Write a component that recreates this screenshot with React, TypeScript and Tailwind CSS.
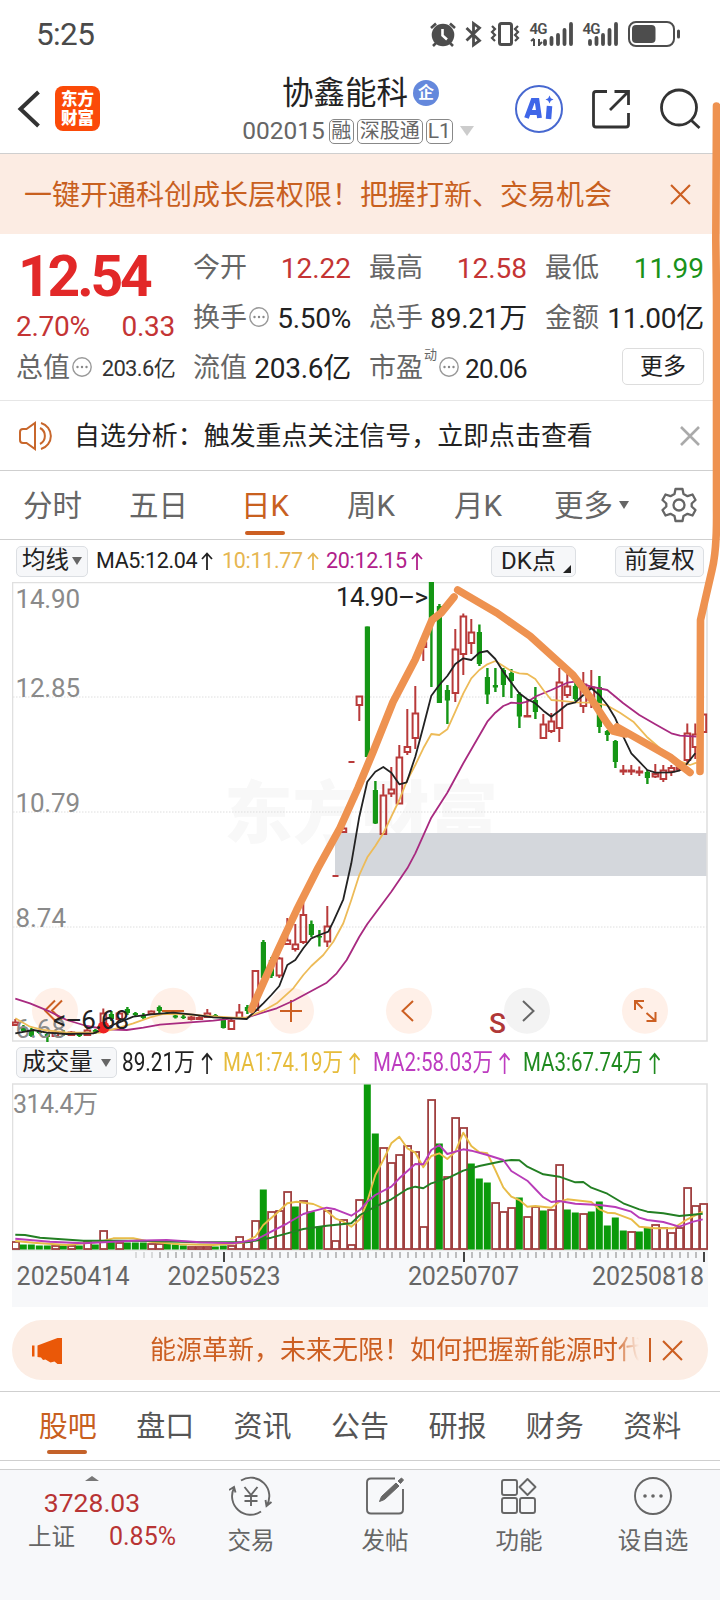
import React from 'react'
import clsx from 'clsx'

const CANDLE_STEP = 8
const FIRST_X = 15.3
const UP = '#b83a3a'
const DOWN = '#159615'

// [index, up/down, high, body top, body bottom, low]
type Candle = [number, 'r' | 'g', number, number, number, number]

const candles: Candle[] = [
  [0, 'r', 1019, 1022, 1025, 1026],
  [1, 'g', 1025, 1027, 1031, 1032],
  [2, 'g', 1028, 1030, 1036, 1037],
  [3, 'g', 1030, 1031, 1033, 1034],
  [4, 'g', 1033, 1034, 1037, 1042],
  [5, 'r', 1030, 1032, 1036, 1037],
  [6, 'g', 1030, 1032, 1034, 1036],
  [7, 'r', 1031, 1032, 1035, 1036],
  [8, 'g', 1032, 1033, 1036, 1037],
  [9, 'r', 1028, 1030, 1035, 1036],
  [10, 'g', 1029, 1030, 1033, 1034],
  [11, 'r', 1008.5, 1013, 1023, 1025],
  [12, 'g', 1011, 1014, 1019, 1021],
  [13, 'r', 1011, 1013, 1019, 1020],
  [14, 'g', 1007, 1009, 1013, 1015],
  [15, 'g', 1012, 1013, 1015, 1016],
  [16, 'g', 1013, 1015, 1018, 1019],
  [17, 'r', 1010.5, 1011, 1014, 1014.5],
  [18, 'g', 1005.5, 1007, 1011, 1013],
  [19, 'g', 1012, 1012.5, 1013.5, 1014],
  [20, 'g', 1014.5, 1015.5, 1017.5, 1018.5],
  [21, 'g', 1015, 1016.5, 1018, 1019],
  [22, 'r', 1016, 1017, 1019, 1020.5],
  [23, 'r', 1016, 1017.5, 1019, 1020],
  [24, 'r', 1009, 1013, 1017, 1018],
  [25, 'g', 1014, 1015, 1017, 1018],
  [26, 'g', 1018, 1020, 1028, 1028.5],
  [27, 'r', 1019, 1020.5, 1029, 1029],
  [28, 'r', 1004, 1012, 1018, 1019],
  [29, 'g', 1005, 1007, 1011, 1014],
  [30, 'r', 970, 970.5, 1010, 1012],
  [31, 'g', 940, 942, 978, 979],
  [32, 'g', 957, 960, 976, 978],
  [33, 'r', 957, 958, 975.5, 978],
  [34, 'r', 918, 940, 944, 945],
  [35, 'r', 924, 944, 949, 951.5],
  [36, 'r', 903, 914.5, 942, 944],
  [37, 'g', 920.5, 924, 935, 937],
  [38, 'g', 930, 936, 937.5, 946.5],
  [39, 'r', 906, 926, 941.5, 947],
  [41, 'r', 827, 828, 832, 833],
  [43, 'r', 696, 696, 705, 721],
  [44, 'g', 626.5, 626.5, 757, 757],
  [45, 'g', 781, 790, 823.5, 824],
  [46, 'r', 784, 795, 834, 834],
  [47, 'r', 767, 789, 793.5, 797],
  [48, 'r', 745, 757, 803.5, 804],
  [49, 'r', 709, 746.5, 752, 755],
  [50, 'r', 686, 713, 738, 749],
  [51, 'r', 638, 642, 647, 661],
  [52, 'g', 582, 582, 620, 687],
  [53, 'g', 604, 606, 703, 703],
  [54, 'g', 685, 690, 700.5, 724],
  [55, 'r', 629, 649, 693, 702],
  [56, 'r', 613.5, 616, 654, 675],
  [57, 'r', 619, 632, 643, 654],
  [58, 'g', 624.5, 632, 664, 666],
  [59, 'g', 668, 677, 694.5, 704],
  [60, 'g', 668, 685, 687.5, 692],
  [61, 'g', 668, 670, 685, 697],
  [62, 'g', 669, 673, 681, 698],
  [63, 'g', 692, 694, 716.5, 728],
  [64, 'r', 700, 715.5, 716, 717],
  [65, 'g', 687, 700, 712, 719],
  [66, 'r', 714, 724, 738, 738],
  [67, 'r', 713, 721, 731, 733],
  [68, 'r', 668, 682, 728, 742],
  [69, 'r', 674, 686, 695, 698],
  [70, 'g', 680, 686, 699, 701],
  [71, 'r', 672, 684, 706, 713],
  [72, 'r', 670, 687, 700, 708],
  [73, 'g', 676, 687, 727, 733],
  [74, 'g', 730, 731, 735, 741],
  [75, 'g', 740, 741, 762, 768],
  [76, 'r', 765, 770, 771.5, 775],
  [77, 'r', 765, 770, 771.5, 775],
  [78, 'r', 766.5, 771, 772.5, 776],
  [79, 'g', 770, 772, 778, 784],
  [80, 'r', 764, 773.5, 776.5, 778],
  [81, 'r', 765, 770, 779, 782],
  [82, 'r', 765, 767.5, 771.5, 776],
  [83, 'r', 763, 767, 769.5, 771],
  [84, 'r', 723.5, 733, 760, 765],
  [85, 'r', 723.5, 734, 747, 759],
  [86, 'r', 714, 714, 732, 733],
]

// bar heights, negative for a falling day
const volumes = [
  8, -5, -5, -4, -4, 4, -4, 4, -4, 9, -5, 19, -8, 7, -7, -7, -7, 6, 6, -6, -5, -4, 3, 3, 3, -3, -4, 4, 13, 8, 29, -60, 38,
  39, 58, -43, 49, -38, -23, 39, 9, 30, 5, 50, -165, -116, 102, 87, 95, 104, 98, 23, 150, -106, 73, 132, 122, -86, -71,
  -67, 47, 38, 42, -52, 33, 43, -39, 40, 85, -40, -37, 36, -38, -48, -24, -32, -19, 18, -18, -22, 25, 22, 17, 22, 62,
  44, 46,
]

type Segment = [number, number, string]

// joins hand-digitised stretches (3 units per px, each with its own origin) into one line
function trace(segments: Segment[]) {
  return segments
    .flatMap(([ox, oy, pts]) =>
      pts.split(' ').map((p) => {
        const [x, y] = p.split(',').map(Number)
        return `${(ox + x / 3).toFixed(1)},${(oy + y / 3).toFixed(1)}`
      })
    )
    .join(' ')
}

const ma5 = trace([
  [0, 880, '46,460 100,450 140,458 200,462 280,460 310,448 350,430 400,410 454,403 520,398 580,404 640,412 740,417 766,393 790,370 814,345 838,318 862,255 886,240 910,205 934,175 958,165 985,155 1000,125 1018,85'],
  [230, 570, '340,988 364,880 388,740 412,635 436,605 460,591 484,608 508,643 530,637 556,560 580,470 604,377 628,345 652,318 676,282 700,265 724,270'],
  [360, 470, '358,548 382,543 406,567 430,605 454,638 478,670 502,688 526,700 550,722 574,740 598,722 622,703 646,697 670,675 694,655 718,675 742,705 766,745 790,800 814,850 838,875 862,900 886,908 934,907 958,902 982,880 1006,850'],
])
const ma10 = trace([
  [0, 880, '46,415 90,440 130,450 200,458 300,458 350,445 400,430 450,412 490,402 550,402 620,408 700,413 740,412 790,392 830,370 880,325 910,285 934,258 970,225 1000,185'],
  [230, 570, '340,1060 364,990 388,915 412,862 436,828 460,790 484,740 508,690 532,630 556,585 580,535 604,492 628,495 652,478 676,425 700,370 724,325'],
  [360, 470, '358,600 382,583 406,573 430,588 454,603 478,610 502,612 526,627 550,660 574,690 598,692 646,697 700,698 740,706 780,728 820,755 860,800 900,835 950,870 990,885 1010,878'],
])
const ma20 = trace([
  [0, 880, '46,356 90,370 150,395 200,420 260,438 320,448 380,450 430,443 480,434 560,428 640,422 700,415 740,413 780,400 830,385 880,362 930,335 980,308 1010,280 1040,240'],
  [230, 570, '388,1100 412,1062 436,1030 484,965 532,895 556,850 604,743 652,668 700,580'],
  [360, 470, '382,755 406,728 430,708 454,698 480,700 502,695 530,678 574,660 622,638 646,635 694,650 742,660 790,700 838,735 886,763 934,790 960,797 1010,800'],
])

const volMa1 = trace([
  [0, 1060, '46,543 100,548 200,555 300,545 340,535 400,535 450,545 540,553 640,555 730,548 766,530 790,495 830,460 862,430 890,425 940,432 970,445 1006,475 1030,485 1054,500'],
  [360, 1060, '0,478 20,430 46,345 70,300 94,250 118,230 142,265 166,278 190,322 214,288 238,280 262,297 286,275 310,218 334,258 358,277 382,280 406,330 430,382 454,410 478,420 502,440 526,438 574,443 598,425 622,418 694,426 718,448 742,458 766,460 814,478 838,500 886,505 940,505 982,478 1028,455'],
])
const volMa2 = trace([
  [0, 1060, '46,536 150,545 250,550 340,545 400,542 500,540 600,547 700,550 766,540 814,515 862,490 910,462 934,455 980,443 1006,448 1054,467'],
  [360, 1060, '0,450 22,425 46,405 94,380 118,355 166,312 190,313 214,270 238,255 262,282 310,268 334,272 382,285 430,300 454,333 502,362 526,387 550,412 574,426 598,423 646,431 718,435 766,441 814,455 838,473 862,480 910,486 958,500 1000,485 1028,478'],
])
const volMa3 = trace([
  [0, 1060, '46,524 75,525 120,533 250,542 350,542 450,543 600,547 740,547 814,533 862,520 910,507 980,497 1054,490'],
  [360, 1060, '0,465 46,440 94,418 142,387 166,380 190,385 214,370 262,355 310,332 358,318 430,303 454,300 478,301 502,320 550,343 598,350 646,367 670,366 694,383 742,401 790,430 838,448 862,455 910,460 958,468 1028,461'],
])

const quoteTabs = ['股吧', '盘口', '资讯', '公告', '研报', '财务', '资料']

function StatusBar() {
  return (
    <div className="flex h-[70px] items-center justify-between pl-[36px]">
      <span className="text-[31.500px] leading-none tracking-[-0.02em] text-[#4a4a4a]">5:25</span>
      <svg width="300" height="40" viewBox="420 15 300 40" fill="none" stroke="#4d4d4d">
        {/* alarm */}
        <circle cx="443" cy="35" r="11.3" fill="#4d4d4d" stroke="none" />
        <path d="M431 28l5-4.5M455 28l-5-4.5M436 43l-3 3M450 43l3 3" strokeWidth="2.6" />
        <path d="M442.500 29v6.500l4.500 4" stroke="#fff" strokeWidth="2.6" />
        {/* bluetooth */}
        <path d="M466.500 28l13 12.500-6 4.500V23.500l6 4.500-13 12.500" strokeWidth="2.8" />
        {/* vibrate */}
        <rect x="499.500" y="23.500" width="12" height="21" rx="2" strokeWidth="3" />
        <path d="M492 26l3 3-3 3 3 3-3 3 3 3M518 26l-3 3 3 3-3 3 3 3-3 3" strokeWidth="2.2" />
        <g fill="#4d4d4d" stroke="none" fontFamily="Roboto, sans-serif" fontWeight="600" fontSize="15">
          <text x="529.500" y="34" textLength="18">4G</text>
          <text x="582.500" y="34" textLength="18">4G</text>
        </g>
        <path d="M534 39v7M531 41l3-2.500M539 39v7M539 45l3-3" strokeWidth="2" />
        <path d="M545 41v3M551.500 38v6M558 35v9M564.500 30v14M571 24v20" strokeWidth="3.8" strokeLinecap="round" />
        <path d="M590 41v3M596.500 38v6M603 35v9M609.500 30v14M616 24v20" strokeWidth="3.800" strokeLinecap="round" />
        {/* battery */}
        <rect x="629" y="22" width="45" height="24" rx="7" strokeWidth="2" />
        <rect x="632" y="25" width="23.500" height="18" rx="4" fill="#4d4d4d" stroke="none" />
        <path d="M678.500 31v6" strokeWidth="3" strokeLinecap="round" />
      </svg>
    </div>
  )
}

function Header() {
  return (
    <div className="flex h-[84px] border-b border-[#cfcfcf]">
      <div className="flex w-[228px] items-start pl-[16px] pt-[16px]">
        <svg width="28" height="46" viewBox="16 86 28 46" fill="none" stroke="#333" strokeWidth="4">
          <path d="M38.500 92L20.500 109l18 17" />
        </svg>
        <div className="ml-[11px] flex h-[45px] w-[45px] flex-col items-center justify-center rounded-lg bg-[#fb4a08] text-[16.500px] font-black leading-[19px] text-white">
          <span>东方</span>
          <span>财富</span>
        </div>
      </div>
      <div className="flex w-[260px] flex-col items-center">
        <div className="flex h-[43px] items-center pl-[5px] pt-[3px]">
          <span className="text-[31.500px] leading-[43px] text-[#222]">协鑫能科</span>
          <span className="ml-[5px] flex h-[26px] w-[26px] items-center justify-center rounded-full bg-[#6488dc] text-[16px] font-bold leading-none text-white">
            企
          </span>
        </div>
        <div className="mt-[5px] flex items-center text-[#666]">
          <span className="text-[24.500px] leading-[26px]">002015</span>
          <span className="ml-[4px] flex h-[25px] w-[25px] items-center justify-center rounded-[5px] border-[1.500px] border-[#888] text-[20px] leading-none">融</span>
          <span className="ml-[3px] flex h-[25px] w-[66px] items-center justify-center rounded-[5px] border-[1.500px] border-[#888] text-[20px] leading-none">深股通</span>
          <span className="ml-[3px] flex h-[25px] w-[27px] items-center justify-center rounded-[5px] border-[1.500px] border-[#888] text-[21px] leading-none">L1</span>
          <svg className="ml-[7px]" width="14" height="10" viewBox="0 0 14 10"><path d="M0 0h14L7 10z" fill="#ccc" /></svg>
        </div>
      </div>
      <svg className="mt-[14px]" width="232" height="50" viewBox="488 84 232 50" fill="none" stroke="#333" strokeWidth="2.800">
        <circle cx="539" cy="109" r="23" stroke="#4768d0" strokeWidth="2" />
        <path d="M526.500 118l6.500-17.500h4l2.500 17.500M529.500 112.500h8" stroke="#3f66e8" strokeWidth="4.800" />
        <path d="M549.500 106l-1 13" stroke="#3f66e8" strokeWidth="5.500" />
        <path d="M549.500 95.500l1.300 2.700 2.700 1.300-2.700 1.300-1.300 2.700-1.300-2.700-2.700-1.300 2.700-1.300z" fill="#3f66e8" stroke="none" />
        <path d="M607 91.500h-11q-2.500 0-2.500 2.500v30.500q0 2.500 2.500 2.500h30q2.500 0 2.500-2.500V113M614.500 91.500h14v13.500M628 92l-18 18" />
        <circle cx="679" cy="107.500" r="17.500" />
        <path d="M691.500 120.500l8 7.500" />
      </svg>
    </div>
  )
}

function Cross({ size, color, width = 2 }: { size: number; color: string; width?: number }) {
  return (
    <svg width={size} height={size} viewBox="0 0 20 20" stroke={color} strokeWidth={width}>
      <path d="M1 1l18 18M19 1L1 19" />
    </svg>
  )
}

function Dots() {
  return (
    <svg width="20" height="20" viewBox="0 0 20 20" fill="none">
      <circle cx="10" cy="10" r="9.200" stroke="#999" strokeWidth="1.400" />
      <g fill="#888">
        <circle cx="5.500" cy="10" r="1.200" />
        <circle cx="10" cy="10" r="1.200" />
        <circle cx="14.500" cy="10" r="1.200" />
      </g>
    </svg>
  )
}

interface StatProps {
  label: string
  value: string
  sup?: string
  info?: boolean
  className?: string
}

function Stat({ label, value, sup, info, className }: StatProps) {
  return (
    <div className="flex h-[50px] items-center whitespace-nowrap">
      <span className="pt-[3px] text-[27px] leading-none text-[#666]">{label}</span>
      {sup && <span className="mb-[26px] ml-px text-[13px] leading-none text-[#666]">{sup}</span>}
      {info && <span className="ml-[2px]"><Dots /></span>}
      <span className={clsx('ml-auto pt-[3px] leading-none', className || 'text-[28px] tracking-[-0.01em] text-[#222]')}>{value}</span>
    </div>
  )
}

function QuotePanel() {
  return (
    <div className="flex h-[167px] gap-[18px] border-b border-[#e6e6e6] pl-[16px] pt-[8px]">
      <div className="w-[159px]">
        <div className="flex h-[68px] items-center pl-[2px] text-[57px] font-bold leading-none tracking-[-0.055em] text-[#e22828]">12.54</div>
        <div className="flex h-[32px] items-center justify-between pt-[2px] text-[28px] leading-none tracking-[-0.01em] text-[#c43434]">
          <span>2.70%</span>
          <span>0.33</span>
        </div>
        <Stat label="总值" value="203.6亿" info className="text-[22px] tracking-[-0.03em] text-[#333]" />
      </div>
      <div className="w-[158px]">
        <Stat label="今开" value="12.22" className="text-[28px] text-[#c43434]" />
        <Stat label="换手" value="5.50%" info />
        <Stat label="流值" value="203.6亿" />
      </div>
      <div className="w-[158px]">
        <Stat label="最高" value="12.58" className="text-[28px] text-[#c43434]" />
        <Stat label="总手" value="89.21万" />
        <Stat label="市盈" value="20.06" sup="动" info className="text-[26px] tracking-[-0.025em] text-[#222]" />
      </div>
      <div className="w-[159px]">
        <Stat label="最低" value="11.99" className="text-[28px] text-[#1a921a]" />
        <Stat label="金额" value="11.00亿" />
        <button className="ml-auto mt-[6px] flex h-[37px] w-[82px] items-center justify-center rounded-[5px] border-[1.500px] border-[#ddd] text-[23px] leading-none text-[#222]">
          更多
        </button>
      </div>
    </div>
  )
}

function Notice() {
  return (
    <div className="flex h-[70px] items-center border-b border-[#cfcfcf] pl-[19px] pr-[20px]">
      <svg width="36" height="30" viewBox="0 0 36 30" fill="none" stroke="#c8672c" strokeWidth="2">
        <path d="M16 2v26L7.500 22H4q-3 0-3-3v-8q0-3 3-3h3.500zM21 7a9 9 0 0 1 0 16M22 2a13.500 13.500 0 0 1 0 26" />
      </svg>
      <span className="ml-[19px] pt-[2px] text-[25.950px] leading-none text-[#222]">自选分析：触发重点关注信号，立即点击查看</span>
      <span className="ml-auto"><Cross size={20} color="#aaa" width={2.6} /></span>
    </div>
  )
}

function PeriodTabs() {
  return (
    <div className="flex h-[69px] items-center border-b border-[#cfcfcf] text-[29.500px] leading-none text-[#666]">
      <span className="w-[106px] pl-[23px] pt-[4px]">分时</span>
      <span className="w-[106px] pl-[23px] pt-[4px]">五日</span>
      <span className="relative w-[106px] pl-[29px] pt-[4px] text-[#c8601f]">
        日K
        <i className="absolute -bottom-[13px] left-[33px] h-[4px] w-[40px] rounded-full bg-[#cc5f22]" />
      </span>
      <span className="w-[106px] pl-[29px] pt-[4px]">周K</span>
      <span className="w-[106px] pl-[30px] pt-[4px]">月K</span>
      <span className="flex w-[131px] items-center pl-[24px]">
        <span className="pt-[4px]">更多</span>
        <svg className="ml-[6px]" width="10" height="8" viewBox="0 0 10 8"><path d="M0 0h10L5 8z" fill="#666" /></svg>
      </span>
      <svg width="36" height="36" viewBox="0 0 36 36" fill="none" stroke="#666" strokeWidth="2.300" strokeLinejoin="round">
        <path d="M14.500 2h7l1 5 4 2.200 5-1.700 3 5.500-3.800 3.500v3l3.800 3.500-3 5.500-5-1.700-4 2.200-1 5h-7l-1-5-4-2.200-5 1.700-3-5.500 3.800-3.500v-3L1.500 13l3-5.500 5 1.700 4-2.200z" />
        <circle cx="18" cy="18" r="5.500" />
      </svg>
    </div>
  )
}

const chip = 'flex h-[31px] items-center justify-center rounded-[5px] border border-[#dcdfe3] bg-[#f6f7f9] leading-none text-[#222]'

function MaRow() {
  return (
    <div className="flex h-[42px] items-center pl-[16px] pr-[16px] text-[21.500px] leading-none whitespace-nowrap">
      <span className={clsx(chip, 'w-[72px] text-[23.500px]')}>
        均线
        <svg className="ml-[3px]" width="10" height="8" viewBox="0 0 10 8"><path d="M0 0h10L5 8z" fill="#666" /></svg>
      </span>
      <span className="ml-[8px] w-[126px] tracking-[-0.015em] text-[#222]">MA5:12.04<Up /></span>
      <span className="w-[104px] tracking-[-0.015em] text-[#e6b650]">10:11.77<Up /></span>
      <span className="tracking-[-0.015em] text-[#b0208a]">20:12.15<Up /></span>
      <span className={clsx(chip, 'relative ml-auto w-[85px] pr-[10px] text-[24px]')}>
        DK点
        <svg className="absolute bottom-[3px] right-[4px]" width="8" height="8"><path d="M8 0v8H0z" fill="#222" /></svg>
      </span>
      <span className={clsx(chip, 'ml-[39px] w-[89px] text-[23.500px]')}>前复权</span>
    </div>
  )
}

function Up() {
  return (
    <svg className="ml-[4px] inline-block align-[-2px]" width="12" height="18" viewBox="0 0 12 18" fill="none" stroke="currentColor" strokeWidth="1.800">
      <path d="M6 18V1.500M1 7l5-5.500L11 7" />
    </svg>
  )
}

function UpTall() {
  return (
    <svg className="ml-[7px] inline-block align-[-3px]" width="15" height="22" viewBox="0 0 15 22" fill="none" stroke="currentColor" strokeWidth="2">
      <path d="M7.500 22V2M1.500 8l6-6 6 6" />
    </svg>
  )
}

function PriceChart() {
  return (
    <svg className="ml-[12px] block" width="696" height="460" viewBox="12 582 696 460" fill="none" fontFamily='Roboto, "Noto Sans CJK SC", sans-serif'>
      <text x="224" y="838" fontSize="68.500" fontWeight="900" fill="#f8f8f8" fontFamily='"Noto Sans CJK SC", sans-serif'>东方财富</text>
      <path d="M13 697h694M13 812h694M13 927h694" stroke="#dedede" strokeDasharray="1.500 1.500" />
      <rect x="335" y="833" width="372" height="43" fill="#d4d7dc" />
      <path d="M12 582.500h695V1041H12.500V582" stroke="#e0e0e0" strokeWidth="1.600" />

      {[55, 173, 291, 409, 527, 645].map((cx) => (
        <circle key={cx} cx={cx} cy="1010.700" r="23" fill={cx === 527 ? '#f3f3f3' : '#fff0e8'} />
      ))}
      <g stroke="#cc5f22" strokeWidth="2">
        <path d="M55 1000.500L45 1010.500l10 10M62 1000.500L52 1010.500l10 10M162 1011h22M280 1011h22M291 1000v22M413 1001l-10.500 10 10.500 10" />
        <path d="M635 1010v-9h9M635.500 1001.500l7 7M646.500 1021h9v-9M655 1020.500l-8.500-7.500" />
      </g>
      <path d="M523 1001l10.500 10-10.500 10" stroke="#666" strokeWidth="2" />

      {candles.map(([i, kind, high, top, bottom, low]) => {
        const x = FIRST_X + i * CANDLE_STEP
        if (kind === 'g') {
          return (
            <g key={i} fill={DOWN}>
              <rect x={x - 1.1} y={high} width="2.400" height={low - high} />
              <rect x={x - 2.500} y={top} width="5.200" height={Math.max(bottom - top, 1)} />
            </g>
          )
        }
        return (
          <g key={i} stroke={UP} strokeWidth="2">
            <path d={`M${x} ${high}V${top}M${x} ${bottom}V${low}`} />
            <rect x={x - 2.700} y={top + 0.5} width="5.600" height={Math.max(bottom - top - 0.5, 0.5)} />
          </g>
        )
      })}
      <path d="M332.500 876h6M348.500 762h6" stroke={UP} strokeWidth="2" />

      <g fontSize="26" fill="#8a8a8a">
        <text x="15.500" y="607.500" textLength="64.500">14.90</text>
        <text x="15.500" y="697" textLength="64.500">12.85</text>
        <text x="15.500" y="811.500" textLength="64.500">10.79</text>
        <text x="15.500" y="926.500" textLength="50.500">8.74</text>
        <text x="15.500" y="1038" textLength="50.500">6.68</text>
      </g>

      <g strokeWidth="1.800" strokeLinejoin="round">
        <polyline points={ma20} stroke="#a82a80" />
        <polyline points={ma10} stroke="#edbb58" />
        <polyline points={ma5} stroke="#222" />
      </g>
      <circle cx="103.500" cy="1027.500" r="6" fill="#e22" />
      <g fontSize="26" fill="#222">
        <text x="336" y="606" textLength="92">14.90–&gt;</text>
        <text x="53" y="1028.500" textLength="76">&lt;–6.68</text>
      </g>
      <text x="489" y="1033" fontSize="28" fontWeight="500" fill="#b03838" textLength="16">S</text>
    </svg>
  )
}

function VolumeRow() {
  return (
    <div className="flex h-[41px] items-center pl-[16px] text-[25px] leading-none whitespace-nowrap">
      <span className={clsx(chip, 'w-[101px] text-[23.500px]')}>
        成交量
        <svg className="ml-[8px]" width="10" height="8" viewBox="0 0 10 8"><path d="M0 0h10L5 8z" fill="#666" /></svg>
      </span>
      <span className="ml-[5px] w-[101px]"><b className="inline-block origin-left scale-x-[.83] font-normal text-[#222]">89.21万<UpTall /></b></span>
      <span className="w-[150px]"><b className="inline-block origin-left scale-x-[.82] font-normal text-[#e6bc3c]">MA1:74.19万<UpTall /></b></span>
      <span className="w-[150px]"><b className="inline-block origin-left scale-x-[.82] font-normal text-[#bd3cc0]">MA2:58.03万<UpTall /></b></span>
      <span><b className="inline-block origin-left scale-x-[.82] font-normal text-[#1f8a1f]">MA3:67.74万<UpTall /></b></span>
    </div>
  )
}

function VolumeChart() {
  return (
    <svg className="ml-[12px] block" width="696" height="224" viewBox="12 1083 696 224" fill="none" fontFamily='Roboto, "Noto Sans CJK SC", sans-serif'>
      <rect x="12" y="1251" width="696" height="56" fill="#f7f8fa" />
      <path d="M12 1084h695V1250H12.500V1084" stroke="#e0e0e0" strokeWidth="1.600" />
      <text x="13" y="1113" fontSize="25" fill="#8a8a8a" textLength="85">314.4万</text>
      {volumes.map((v, i) => {
        const x = FIRST_X + i * CANDLE_STEP
        const h = Math.abs(v)
        if (v < 0) return <rect key={i} x={x - 3.500} y={1249.500 - h} width="7" height={h} fill="#0a9a0a" />
        return <rect key={i} x={x - 3.200} y={1250 - h} width="7" height={h - 1} stroke="#a04040" strokeWidth="1.800" fill="#fff" />
      })}
      <g strokeWidth="1.900" strokeLinejoin="round">
        <polyline points={volMa1} stroke="#e8bc48" />
        <polyline points={volMa3} stroke="#237f23" />
        <polyline points={volMa2} stroke="#b83cb8" />
      </g>
      {Array.from({ length: 72 }, (_, i) => (
        <path key={i} d={`M${136 + i * CANDLE_STEP} 1252v6`} stroke="#aaa" strokeWidth="1.500" opacity={i < 3 ? 0.5 : 1} />
      ))}
      <path d="M224 1252v10M464 1252v10M704 1252v10" stroke="#444" strokeWidth="2" />
      <g fontSize="25" fill="#666">
        <text x="16.500" y="1284.500" textLength="113">20250414</text>
        <text x="167.500" y="1284.500" textLength="113">20250523</text>
        <text x="408" y="1284.500" textLength="111">20250707</text>
        <text x="592" y="1284.500" textLength="112">20250818</text>
      </g>
    </svg>
  )
}

function Promo() {
  return (
    <div className="mx-[12px] mt-[13px] flex h-[60px] items-center rounded-full bg-[#fcede4] pl-[19px] pr-[25px]">
      <svg width="32" height="28" viewBox="31 1335 32 28" fill="#ea5808">
        <path d="M32 1344.500h2.500v11H32zM37.500 1344.500l20-7.500h4.500v26h-4.500l-3-2.500-4 1-5-3-2.500 .5-2-2.500-3.500-.5z" />
      </svg>
      <span className="ml-[87px] w-[494px] text-[26px] leading-[40px] whitespace-nowrap text-[#cc5f22] [mask-image:linear-gradient(to_right,#000_94%,transparent_99%)]">
        能源革新，未来无限！如何把握新能源时代
      </span>
      <i className="ml-[5px] h-[24px] w-[1.500px] bg-[#cc5f22]" />
      <span className="ml-auto"><Cross size={21} color="#cc5f22" /></span>
    </div>
  )
}

function QuoteTabs() {
  return (
    <div className="mt-[11px] flex h-[70px] items-center border-y border-[#cfcfcf] pl-[19px] pr-[19px] text-[29px] leading-none text-[#555]">
      {quoteTabs.map((tab, i) => (
        <span key={tab} className={clsx('relative flex-1 pt-[3px] text-center', i === 0 && 'text-[#c8601f]')}>
          {tab}
          {i === 0 && <i className="absolute -bottom-[12px] left-[28px] h-[4px] w-[40px] rounded-full bg-[#c4622a]" />}
        </span>
      ))}
    </div>
  )
}

function NavItem({ label, children }: { label: string; children: React.ReactNode }) {
  return (
    <div className="flex w-[134px] flex-col items-center pt-[6px]">
      <svg width="44" height="40" viewBox="-22 -20 44 40" fill="none" stroke="#666" strokeWidth="1.900">{children}</svg>
      <span className="mt-[12px] text-[23.500px] leading-[26px] text-[#666]">{label}</span>
    </div>
  )
}

function BottomNav() {
  return (
    <div className="mt-[8px] flex h-[132px] border-t border-[#cfcfcf] bg-[#f7f8fa]">
      <div className="w-[184px]">
        <svg className="ml-[85px] mt-[6px] block" width="14" height="5"><path d="M0 5l7-5 7 5z" fill="#777" /></svg>
        <div className="mt-[6px] text-center text-[26.500px] leading-[32px] text-[#b83434]">3728.03</div>
        <div className="flex items-center justify-between pl-[28px] pr-[8px] leading-[36px]">
          <span className="text-[23.500px]  text-[#666]">上证</span>
          <span className="text-[25px] text-[#b83434]">0.85%</span>
        </div>
      </div>
      <NavItem label="交易">
        <path d="M-10 -15.500A18.500 18.500 0 0 1 15.500 10M10 15.500A18.500 18.500 0 0 1 -17 -8M-22 -6l5-3 1.500 5.500M20.500 6l-5 4-1-6M-6.500 -9l6.500 8 6.500-8M0 -1v11M-6.500 0h13M-6.500 5h13" />
      </NavItem>
      <NavItem label="发帖">
        <path d="M10 -17.500h-24q-4 0-4 4v27q0 4 4 4h28q4 0 4-4V-7" />
        <path d="M-5.500 5.500l2-5L11 -13l3 3L-0.500 3.500zM13 -15l3.500-3 2 2-3 3.500z" fill="#666" strokeWidth="1" />
      </NavItem>
      <NavItem label="功能">
        <rect x="-17" y="-16" width="15" height="15" rx="2" />
        <rect x="-17" y="2" width="15" height="15" rx="2" />
        <rect x="1" y="2" width="15" height="15" rx="2" />
        <path d="M8.500 -17l8 8-8 8-8-8z" strokeLinejoin="round" />
      </NavItem>
      <NavItem label="设自选">
        <circle r="18" />
        <path d="M-8 0h.01M0 0h.01M8 0h.01" strokeWidth="3.600" strokeLinecap="round" />
      </NavItem>
    </div>
  )
}

// freehand marker strokes drawn over the whole screen
function Scribble() {
  return (
    <svg className="pointer-events-none absolute left-0 top-0" width="720" height="1600" viewBox="0 0 720 1600" fill="none" stroke="#ee9250" strokeWidth="7.600" strokeLinecap="round" strokeLinejoin="round">
      <path d="M716.500 106L715.800 240L716.500 300V510Q717 550 712 570L700.500 620L700 771.500" />
      <path d="M251.500 1009.500L278 950L296.700 910L318 868L340 828L358 788L373 752L393 702L415 660L432 620L441 613L454 597" />
      <path d="M457.700 590L497 613L530 636L562 665L573 675L590 697L607 723L613 731L625 734L617 727L647 744L670 757L690 772.500" />
    </svg>
  )
}

export default function App() {
  return (
    <div className='relative h-[1600px] w-[720px] overflow-hidden bg-white font-[Roboto,"Noto_Sans_CJK_SC",sans-serif]'>
      <StatusBar />
      <Header />
      <div className="flex h-[80px] items-center justify-between bg-[#fcece3] pl-[24px] pr-[29px] text-[28px] leading-none text-[#c8601f]">
        <span className="pt-[4px]">一键开通科创成长层权限！把握打新、交易机会</span>
        <Cross size={21} color="#cc5f22" />
      </div>
      <QuotePanel />
      <Notice />
      <PeriodTabs />
      <MaRow />
      <PriceChart />
      <VolumeRow />
      <VolumeChart />
      <Promo />
      <QuoteTabs />
      <BottomNav />
      <Scribble />
    </div>
  )
}
